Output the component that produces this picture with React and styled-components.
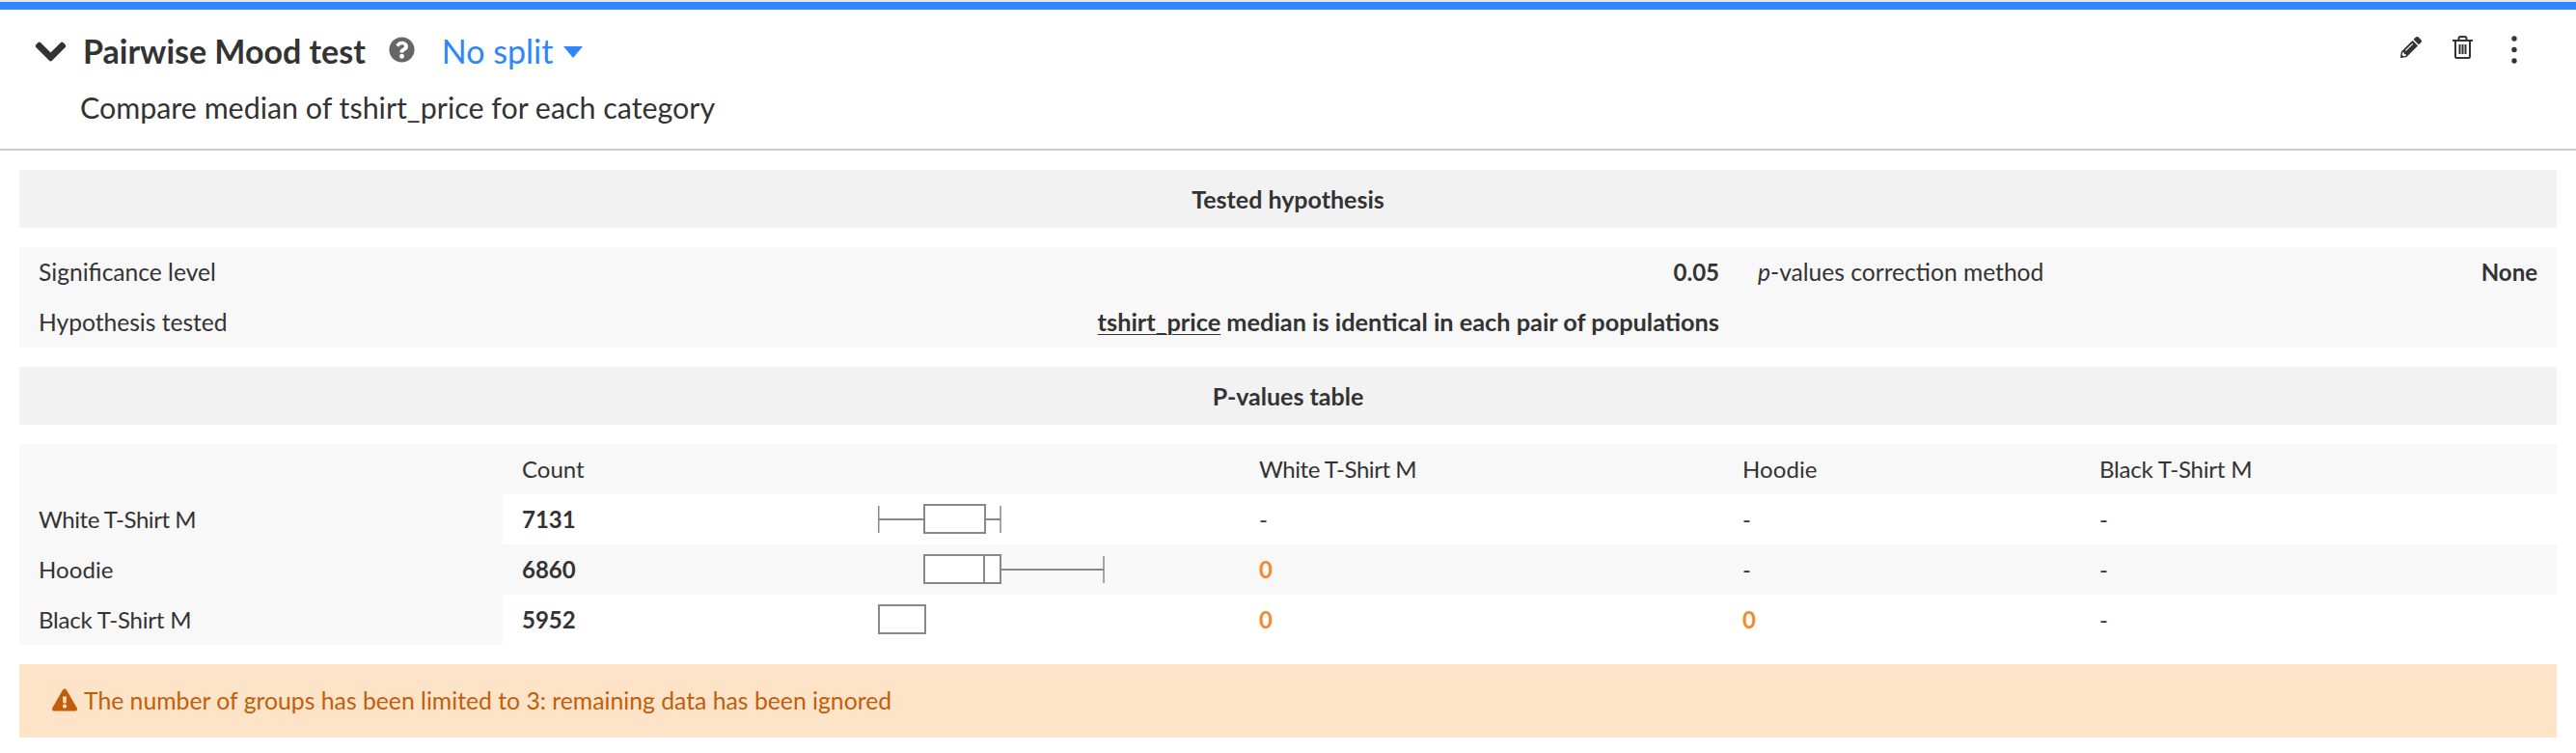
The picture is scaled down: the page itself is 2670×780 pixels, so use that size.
import React from "react";
import styled, { createGlobalStyle } from "styled-components";
import { FaChevronDown, FaQuestionCircle, FaPencilAlt, FaExclamationTriangle } from "react-icons/fa";

const Global = createGlobalStyle`
  html, body { margin: 0; padding: 0; background: #fff; }
  body { font-family: "Lato", "Noto Sans", sans-serif; color: #333; }
`;

const Page = styled.div`
  width: 2670px;
  height: 780px;
  overflow: hidden;
  background: #fff;
  border-top: 2px solid #e6e6e6;
  box-sizing: border-box;
`;

const Card = styled.section`
  border-top: 8px solid #2d86fb;
`;

const Header = styled.header`
  height: 146px;
  box-sizing: border-box;
  border-bottom: 2px solid #ccc;
  display: flex;
  justify-content: space-between;
  padding: 18px 0 0 35px;
`;

const TitleBlock = styled.div`
  display: flex;
  flex-direction: column;
`;

const TitleRow = styled.div`
  display: flex;
  align-items: center;
  height: 50px;
  color: #333;
  svg { display: block; }
`;

const Chevron = styled(FaChevronDown)`
  stroke: currentColor;
  stroke-width: 22px;
`;

const Title = styled.h2`
  margin: 0 0 0 16px;
  font-size: 34px;
  font-weight: 700;
  line-height: 50px;
  white-space: nowrap;
`;

const Help = styled.span`
  display: flex;
  margin: -4px 28px 0 24px;
  color: #666;
`;

const Split = styled.span`
  font-size: 34px;
  line-height: 50px;
  color: #2d86fb;
`;

const Caret = styled.i`
  width: 0;
  height: 0;
  margin: 2px 0 0 11px;
  border-left: 10px solid transparent;
  border-right: 10px solid transparent;
  border-top: 12px solid #2d86fb;
`;

const Description = styled.p`
  margin: 13px 0 0 48px;
  font-size: 30.400px;
  line-height: 40px;
  white-space: nowrap;
`;

const Actions = styled.div`
  display: flex;
  align-items: flex-start;
  padding: 9px 0 0 0;
  color: #333;
  svg { display: block; }
`;

const ActionIcon = styled.span`
  display: block;
  width: ${(p) => p.$w}px;
  margin-top: ${(p) => p.$top}px;
`;

const Body = styled.div`
  padding: 20px 20px 16px;
  display: flex;
  flex-direction: column;
  gap: 20px;
`;

const SectionTitle = styled.h3`
  margin: 0;
  height: 60px;
  background: #f2f2f2;
  font-size: 25px;
  font-weight: 700;
  line-height: 60px;
  text-align: center;
`;

const Info = styled.div`
  background: #f8f8f8;
  display: grid;
  grid-template-columns: 1782px 848px;
  grid-auto-rows: 52px;
`;

const InfoCell = styled.div`
  display: flex;
  align-items: center;
  justify-content: space-between;
  padding: 0 20px 2px;
  font-size: 24.600px;
  white-space: nowrap;
  box-sizing: border-box;
`;

const InfoLabel = styled.span``;

const InfoValue = styled.b`
  font-weight: 700;
  font-size: 24px;
`;

const Statement = styled(InfoValue)`
  font-size: 25.300px;
`;

const Field = styled.span`
  text-decoration: underline;
  text-underline-offset: 3px;
  text-decoration-thickness: 1px;
`;

const Table = styled.table`
  width: 2630px;
  border-collapse: collapse;
  table-layout: fixed;
  font-size: 24px;
`;

const Row = styled.tr`
  height: 52px;
  background: ${(p) => (p.$shaded ? "#f8f8f8" : "#fff")};
`;

const Cell = styled.td`
  padding: 0 20px 2px;
  white-space: nowrap;
  background: ${(p) => (p.$label ? "#f8f8f8" : "transparent")};
  font-weight: ${(p) => (p.$bold ? 700 : 400)};
  color: ${(p) => (p.$hit ? "#f58a2c" : "inherit")};
`;

const GroupName = styled.span`
  letter-spacing: ${(p) => p.$spacing}px;
`;

const PlotCell = styled.td`
  padding: 0 0 0 20px;
  svg { display: block; }
`;

const Warning = styled.div`
  height: 76px;
  box-sizing: border-box;
  padding: 0 0 2px 34px;
  background: #fde4c8;
  color: #c25e0a;
  display: flex;
  align-items: center;
  gap: 7px;
  font-size: 24.750px;
  white-space: nowrap;
`;

const TrashIcon = () => (
  <svg width="21" height="24" viewBox="0 0 21 24" fill="none" stroke="currentColor">
    <path d="M0 5h21" strokeWidth="2" />
    <path d="M6.500 4.500V2.800Q6.500 1 8.300 1h4.400Q14.500 1 14.500 2.800V4.500" strokeWidth="2" />
    <path d="M3 5v16.500Q3 23 4.500 23h12Q18 23 18 21.500V5" strokeWidth="2" />
    <path d="M7.500 9v10M10.500 9v10M13.500 9v10" strokeWidth="2" />
  </svg>
);

const DotsIcon = () => (
  <svg width="6" height="30" viewBox="0 0 6 30" fill="currentColor">
    <circle cx="3" cy="3" r="2.700" />
    <circle cx="3" cy="14.500" r="2.700" />
    <circle cx="3" cy="26" r="2.700" />
  </svg>
);

const BoxPlot = ({ x1, q1, med, q3, x2 }) => (
  <svg width="300" height="34" viewBox="0 0 300 34" fill="none" stroke="#888" strokeWidth="2">
    {x1 !== q1 && <path d={`M${x1} 17H${q1}`} />}
    {x1 !== q1 && <path d={`M${x1} 3V31`} strokeWidth="1.500" />}
    <rect x={q1} y="2" width={q3 - q1} height="29" fill="#fff" />
    {med !== q1 && med !== q3 && <path d={`M${med} 2V31`} />}
    {x2 !== q3 && <path d={`M${q3} 17H${x2}`} />}
    {x2 !== q3 && <path d={`M${x2} 3V31`} strokeWidth="1.500" />}
  </svg>
);

const groups = [
  { name: "White T-Shirt M", spacing: -0.45 },
  { name: "Hoodie", spacing: 0.1 },
  { name: "Black T-Shirt M", spacing: -0.2 },
];

const rows = [
  { group: groups[0], count: 7131, plot: { x1: 0.750, q1: 48, med: 48, q3: 111, x2: 127 }, vals: ["-", "-", "-"] },
  { group: groups[1], count: 6860, shaded: true, plot: { x1: 48, q1: 48, med: 110, q3: 127, x2: 234 }, vals: ["0", "-", "-"] },
  { group: groups[2], count: 5952, plot: { x1: 1, q1: 1, med: 1, q3: 49, x2: 49 }, vals: ["0", "0", "-"] },
];

export default function App() {
  return (
    <Page>
      <Global />
      <Card>
        <Header>
          <TitleBlock>
            <TitleRow>
              <Chevron size={35} />
              <Title>Pairwise Mood test</Title>
              <Help><FaQuestionCircle size={27} /></Help>
              <Split>No split</Split>
              <Caret />
            </TitleRow>
            <Description>Compare median of tshirt_price for each category</Description>
          </TitleBlock>
          <Actions>
            <ActionIcon $w={54} $top={1}><FaPencilAlt size={22} /></ActionIcon>
            <ActionIcon $w={61} $top={0}><TrashIcon /></ActionIcon>
            <ActionIcon $w={67} $top={0}><DotsIcon /></ActionIcon>
          </Actions>
        </Header>
        <Body>
          <SectionTitle>Tested hypothesis</SectionTitle>
          <Info>
            <InfoCell>
              <InfoLabel>Significance level</InfoLabel>
              <InfoValue>0.05</InfoValue>
            </InfoCell>
            <InfoCell>
              <InfoLabel><em>p</em>-values correction method</InfoLabel>
              <InfoValue>None</InfoValue>
            </InfoCell>
            <InfoCell>
              <InfoLabel>Hypothesis tested</InfoLabel>
              <Statement><Field>tshirt_price</Field> median is identical in each pair of populations</Statement>
            </InfoCell>
          </Info>
          <SectionTitle>P-values table</SectionTitle>
          <Table>
            <colgroup>
              <col width="501" />
              <col width="369" />
              <col width="395" />
              <col width="501" />
              <col width="370" />
              <col width="494" />
            </colgroup>
            <tbody>
              <Row $shaded>
                <Cell />
                <Cell>Count</Cell>
                <Cell />
                {groups.map((g) => (
                  <Cell key={g.name}><GroupName $spacing={g.spacing}>{g.name}</GroupName></Cell>
                ))}
              </Row>
              {rows.map((r) => (
                <Row key={r.group.name} $shaded={r.shaded}>
                  <Cell $label><GroupName $spacing={r.group.spacing}>{r.group.name}</GroupName></Cell>
                  <Cell $bold>{r.count}</Cell>
                  <PlotCell><BoxPlot {...r.plot} /></PlotCell>
                  {r.vals.map((v, i) => (
                    <Cell key={i} $bold={v === "0"} $hit={v === "0"}>{v}</Cell>
                  ))}
                </Row>
              ))}
            </tbody>
          </Table>
          <Warning>
            <FaExclamationTriangle size={26} />
            The number of groups has been limited to 3: remaining data has been ignored
          </Warning>
        </Body>
      </Card>
    </Page>
  );
}
